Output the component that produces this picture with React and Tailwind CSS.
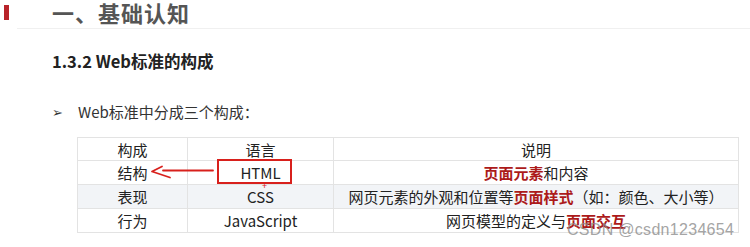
import React from 'react';

const font = { fontFamily: '"Microsoft YaHei", "Noto Sans CJK SC", "Noto Sans", sans-serif' };

const rows = [
  { part: '结构', lang: 'HTML', desc: [{ t: '页面元素', red: true }, { t: '和内容' }] },
  {
    part: '表现',
    lang: 'CSS',
    shade: true,
    desc: [{ t: '网页元素的外观和位置等' }, { t: '页面样式', red: true }, { t: '（如：颜色、大小等）' }],
  },
  { part: '行为', lang: 'JavaScript', desc: [{ t: '网页模型的定义与' }, { t: '页面交互', red: true }] },
];

export default function App() {
  return (
    <div className="relative w-[750px] h-[247px] overflow-hidden bg-white text-[#222]" style={font}>
      {/* section header */}
      <div className="flex items-start h-[29px] border-b border-[#f0f0f0] ml-[17px]">
        <span className="w-[5px] h-[15px] bg-[#b8232a] -ml-[13px] mt-[5px]" />
        <h1 className="ml-[43px] mt-[1px] text-[22px] font-bold text-[#555] leading-none tracking-[1px]">一、基础认知</h1>
      </div>

      <h2 className="mt-[21px] ml-[52px] text-[16.5px] font-bold leading-[22px] text-[#222]">1.3.2 Web标准的构成</h2>

      <div className="flex items-center mt-[29px] ml-[52px] text-[15px] leading-[22px] text-[#333]">
        <span className="w-[26px] text-[13px]">➢</span>
        <span>Web标准中分成三个构成：</span>
      </div>

      <table className="absolute left-[77px] top-[137px] w-[662px] border-collapse text-[15px] text-[#222]">
        <tbody>
          <tr className="h-[23px]">
            <td className="w-[110px] border border-[#e3e3e3] text-center leading-none">构成</td>
            <td className="w-[146px] border border-[#e3e3e3] text-center leading-none">语言</td>
            <td className="border border-[#e3e3e3] text-center leading-none">说明</td>
          </tr>
          {rows.map((r) => (
            <tr key={r.part} className={r.shade ? 'h-[24px] bg-[#f2f4f7]' : 'h-[24px]'}>
              <td className="border border-[#e3e3e3] text-center leading-none">{r.part}</td>
              <td className="border border-[#e3e3e3] text-center leading-none">{r.lang}</td>
              <td className="border border-[#e3e3e3] text-center leading-none">
                {r.desc.map((d, i) => (
                  <span key={i} className={d.red ? 'font-bold text-[#ac1a1a]' : ''}>{d.t}</span>
                ))}
              </td>
            </tr>
          ))}
        </tbody>
      </table>

      {/* annotation: red box and arrow */}
      <div className="absolute left-[217px] top-[159px] w-[75px] h-[25px] border-2 border-[#d8201c]" />
      <span className="absolute left-[262px] top-[181px] text-[9px] leading-none text-[#d8201c]">+</span>
      <svg className="absolute left-[145px] top-[162px]" width="72" height="20" viewBox="0 0 72 20" fill="none">
        <path d="M18 8.5 H68" stroke="#d8201c" strokeWidth="1.8" strokeLinecap="round" />
        <path d="M17 4.5 L7 9.5 L25 15.5" stroke="#d8201c" strokeWidth="1.8" strokeLinecap="round" strokeLinejoin="round" />
      </svg>

      {/* watermark */}
      <span
        className="absolute left-[567px] top-[222px] text-[16px] leading-none text-[#8c8c8c]/80 tracking-[0.3px]"
        style={{ fontFamily: '"Liberation Sans", Arial, sans-serif' }}
      >
        CSDN @csdn1234654
      </span>
    </div>
  );
}
